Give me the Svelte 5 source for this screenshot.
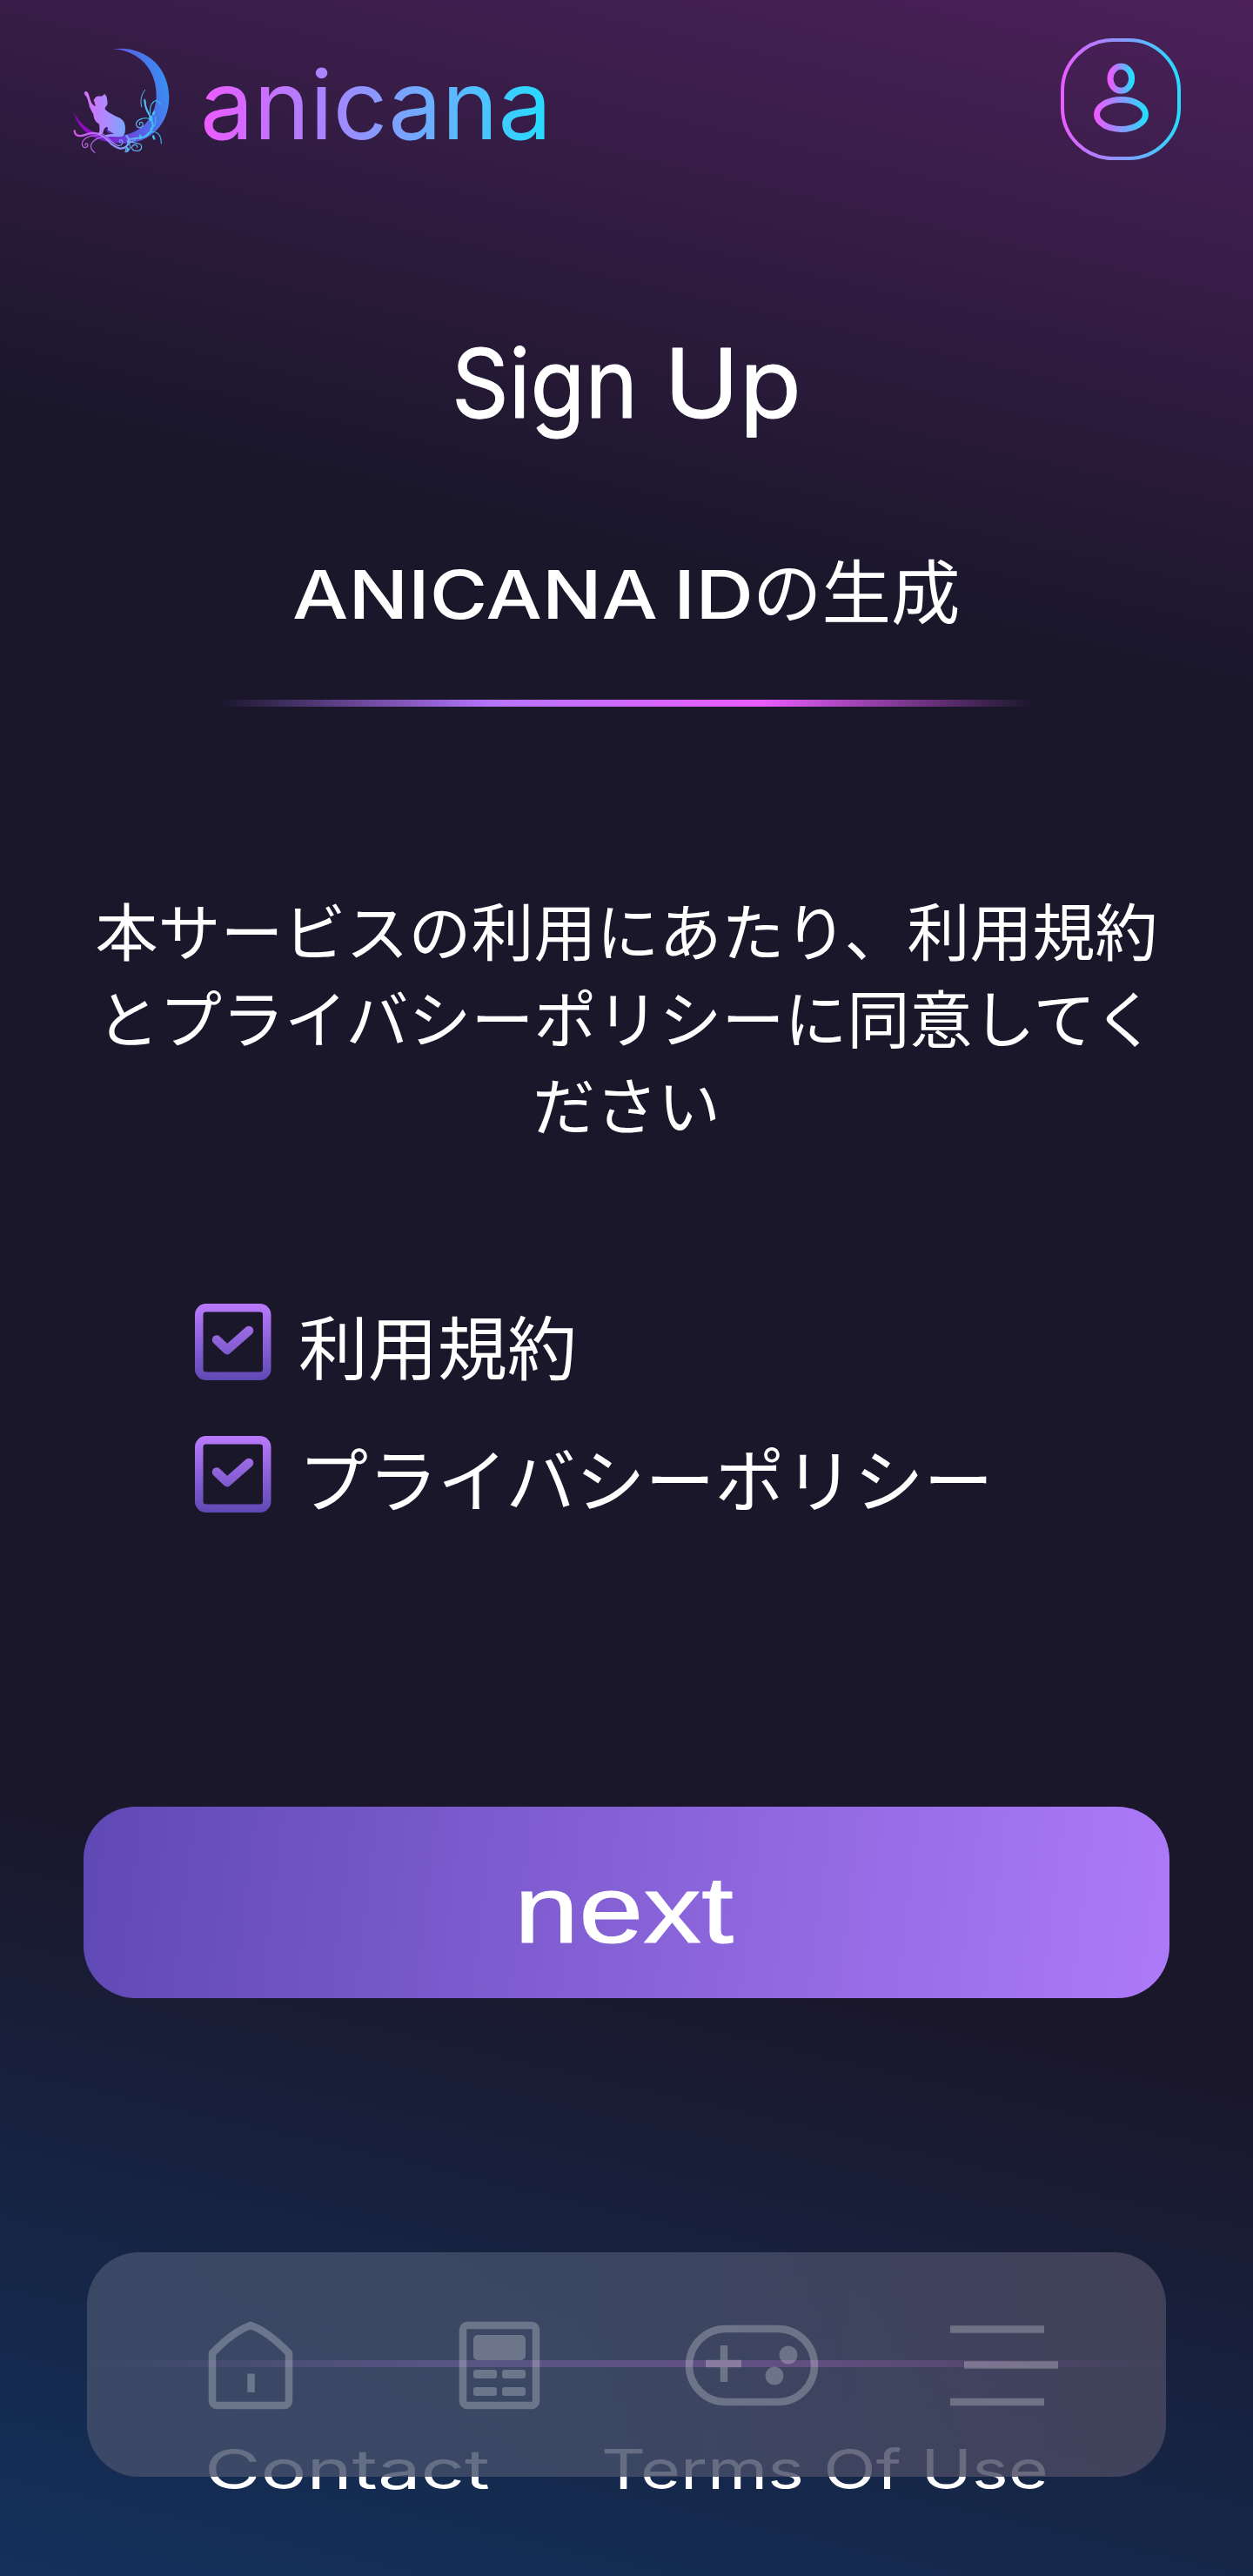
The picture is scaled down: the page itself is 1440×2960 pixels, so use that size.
<script>
  const agreements = ['利用規約', 'プライバシーポリシー'];
</script>

<div class="page">
  <header>
    <svg class="brand" viewBox="78 50 560 130" role="img" aria-label="anicana">
      <defs>
        <linearGradient id="word" gradientUnits="userSpaceOnUse" x1="235" y1="0" x2="628" y2="0">
          <stop offset="0" stop-color="#ea5cff" />
          <stop offset=".36" stop-color="#a685ff" />
          <stop offset="1" stop-color="#26dcff" />
        </linearGradient>
        <linearGradient id="moon" gradientUnits="userSpaceOnUse" x1="20" y1="260" x2="350" y2="180">
          <stop offset="0" stop-color="#9a00c4" />
          <stop offset=".3" stop-color="#7a24cf" />
          <stop offset=".62" stop-color="#5c5ce4" />
          <stop offset="1" stop-color="#3b8df2" />
        </linearGradient>
        <linearGradient id="cat" gradientUnits="userSpaceOnUse" x1="50" y1="0" x2="205" y2="0">
          <stop offset="0" stop-color="#df6cf8" />
          <stop offset=".5" stop-color="#b088ff" />
          <stop offset="1" stop-color="#74a8fa" />
        </linearGradient>
        <linearGradient id="vine" gradientUnits="userSpaceOnUse" x1="20" y1="0" x2="320" y2="0">
          <stop offset="0" stop-color="#d94fe8" />
          <stop offset=".5" stop-color="#8f94fa" />
          <stop offset=".85" stop-color="#45c3f5" />
          <stop offset="1" stop-color="#30b4e0" />
        </linearGradient>
      </defs>
      <g transform="translate(78 50) scale(.3333)">
        <path fill="url(#moon)" d="M154 19 C262 4 349 78 349 186 C349 282 280 344 196 344 C100 344 38 306 20 236 C46 286 92 320 160 320 C242 320 305 262 305 178 C305 92 248 24 154 19Z" />
        <g fill="none" stroke="url(#vine)" stroke-width="3.5" stroke-linecap="round">
          <path stroke-width="7" d="M23 301 C24 326 50 319 72 311 C98 303 122 318 138 334 C164 364 194 372 208 346 C214 334 210 326 202 318" />
          <path d="M104 318 C70 314 44 332 50 352 C56 364 72 358 68 346 C64 342 58 346 60 350" />
          <path d="M118 322 C92 328 76 344 80 360 C83 369 89 373 93 376" />
          <path d="M120 312 C142 320 148 346 174 352 C188 354 194 338 184 332 C176 332 176 340 182 342" />
          <path d="M206 336 C222 322 240 330 262 322 C288 310 300 286 287 260 C280 236 264 226 265 194" stroke-width="6" />
          <path d="M254 218 C248 192 256 172 266 160" stroke-width="3" />
          <path d="M284 250 C264 228 270 212 266 198 M284 240 C280 206 306 180 320 210" />
          <path d="M290 262 C262 250 232 264 236 282 C242 296 262 290 258 274 C252 268 244 274 248 280" />
          <path d="M206 340 C218 352 220 364 200 374 M214 338 C240 348 256 340 254 360 C248 376 222 372 220 358 C224 346 240 346 239 358" />
          <path d="M274 310 C302 296 322 310 322 344 M284 294 C302 288 304 270 302 252" />
          <path d="M198 374 L204 350 L238 326" />
        </g>
        <g fill="#45c3f5">
          <ellipse cx="286" cy="258" rx="6" ry="10" />
          <ellipse cx="296" cy="324" rx="4" ry="9" transform="rotate(-20 296 324)" />
          <ellipse cx="250" cy="322" rx="4" ry="9" />
          <ellipse cx="296" cy="240" rx="4" ry="8" transform="rotate(30 296 240)" />
          <ellipse cx="206" cy="366" rx="4" ry="9" />
        </g>
        <path fill="url(#cat)" d="M60 166 C66 162 71 170 74 182 C80 208 88 214 97 216 C91 207 93 202 91 200 C87 194 89 191 92 191 C97 180 106 182 116 182 C120 180 124 176 128 174 L133 183 C136 186 134 192 136 197 C138 207 136 214 130 218 C126 224 128 228 134 232 C150 246 172 252 184 260 C196 268 200 286 197 304 C196 316 190 321 180 322 L130 321 C128 316 134 314 142 313 L158 312 C150 306 144 302 138 300 C136 296 140 290 134 288 C126 290 124 296 122 304 C120 312 118 316 108 316 C102 312 104 308 108 306 C110 300 110 290 108 278 C94 270 90 260 88 244 C82 232 74 222 72 206 C68 192 66 182 58 176 C55 170 57 167 60 166Z" />
        <path fill="#602ac0" d="M136 287 L139 302 L158 312 C142 312 132 307 133 296Z" />
      </g>
      <text class="word" x="230" y="160" font-size="110" textLength="404" lengthAdjust="spacingAndGlyphs">anicana</text>
    </svg>

    <button class="profile" aria-label="Profile">
      <svg viewBox="1219 44 138 140">
        <defs>
          <linearGradient id="ring"><stop stop-color="#ea5cff" /><stop offset=".45" stop-color="#9491ff" /><stop offset="1" stop-color="#26dcff" /></linearGradient>
        </defs>
        <g fill="none" stroke="url(#ring)">
          <rect x="1221" y="46" width="134" height="136" rx="58" stroke-width="4" />
          <ellipse cx="1288.3" cy="90.3" rx="12.3" ry="14" stroke-width="7" />
          <ellipse cx="1288.5" cy="131.4" rx="28" ry="17" stroke-width="7" />
        </g>
      </svg>
    </button>
  </header>

  <main>
    <h1>
      <svg class="heading" viewBox="480 384 480 130">
        <text x="519" y="480" font-size="110" class="thick" textLength="214" lengthAdjust="spacingAndGlyphs">Sign</text>
        <text x="763" y="480" font-size="110" class="thick" textLength="158" lengthAdjust="spacingAndGlyphs">Up</text>
      </svg>
    </h1>

    <h2>
      <svg class="subheading" viewBox="320 630 800 100">
        <text x="336" y="711" font-size="77" class="medium" textLength="420" lengthAdjust="spacingAndGlyphs">ANICANA</text>
        <text x="774" y="711" font-size="77" class="medium" textLength="92" lengthAdjust="spacingAndGlyphs">ID</text>
        <text class="jp" x="865" y="710" font-size="79.5">の生成</text>
      </svg>
    </h2>
    <div class="rule"></div>

    <p>本サービスの利用にあたり、利用規約とプライバシーポリシーに同意してください</p>

    <ul>
      {#each agreements as label}
        <li>
          <svg class="check" viewBox="0 0 88 88">
            <defs>
              <linearGradient id="tick" gradientUnits="userSpaceOnUse" x1="0" y1="0" x2="0" y2="88">
                <stop stop-color="#b97afc" /><stop offset="1" stop-color="#5f49b4" />
              </linearGradient>
            </defs>
            <g fill="none" stroke="url(#tick)" stroke-linecap="round" stroke-linejoin="round">
              <rect x="4.75" y="4.75" width="78" height="78.5" rx="8" stroke-width="9.5" />
              <path d="M25 41.5 37 53 62 31" stroke-width="10.5" />
            </g>
          </svg>
          <span>{label}</span>
        </li>
      {/each}
    </ul>

    <button class="next">
      <svg viewBox="580 2140 280 110">
        <text x="591" y="2232" font-size="109" class="thick" textLength="252" lengthAdjust="spacingAndGlyphs">next</text>
      </svg>
    </button>
  </main>

  <footer>
    <div class="rule wide"></div>
    <svg class="links" viewBox="220 2800 1000 80">
      <text x="235" y="2859.5" font-size="63" textLength="328" lengthAdjust="spacingAndGlyphs">Contact</text>
      <text x="691" y="2859.5" font-size="63" textLength="514" lengthAdjust="spacingAndGlyphs">Terms Of Use</text>
    </svg>
  </footer>

  <nav>
    <svg viewBox="100 2588 1240 260">
      <g class="icon">
        <path d="M288 2672 Q308 2679 332 2704 V2758 Q332 2764 326 2764 H250 Q244 2764 244 2758 V2704 Q268 2679 288 2672Z" />
        <path d="M288.5 2727.5V2749" />
        <rect x="532" y="2672" width="84" height="92" rx="5" />
        <rect x="792" y="2676" width="144" height="84" rx="42" />
        <path d="M811 2716H852M832 2695V2737" />
        <path d="M1092 2676.5H1200M1108 2717.5H1216M1092 2760H1200" />
      </g>
      <g class="solid">
        <rect x="544" y="2683" width="60" height="29" rx="5" />
        <rect x="544" y="2723" width="27" height="10" rx="3" />
        <rect x="577" y="2723" width="27" height="10" rx="3" />
        <rect x="544" y="2743" width="27" height="10" rx="3" />
        <rect x="577" y="2743" width="27" height="10" rx="3" />
        <circle cx="906" cy="2706" r="10.5" />
        <circle cx="890" cy="2730" r="10.5" />
      </g>
    </svg>
  </nav>
</div>

<style>
  :global(body) {
    margin: 0;
    background: #1a172b;
  }
  .page {
    position: relative;
    width: 1440px;
    height: 2960px;
    overflow: hidden;
    color: #fff;
    font-family: Inter, 'Noto Sans CJK JP', sans-serif;
    background: linear-gradient(193deg, #4c215b 0%, #1a172b 24%, #1a172b 73%, #13315c 100%);
  }
  svg {
    display: block;
    overflow: visible;
  }
  text {
    fill: #fff;
  }
  button {
    border: 0;
    padding: 0;
    background: none;
  }
  header {
    display: flex;
    justify-content: space-between;
    align-items: flex-start;
    box-sizing: border-box;
    height: 384px;
    padding: 44px 83px 0 78px;
  }
  .brand {
    width: 560px;
    height: 130px;
    margin-top: 6px;
  }
  .word {
    fill: url(#word);
  }
  .profile svg {
    width: 138px;
    height: 140px;
  }
  h1,
  h2,
  p,
  ul {
    margin: 0;
    padding: 0;
    font-weight: 400;
  }
  .heading {
    width: 480px;
    height: 130px;
    margin: 0 auto;
  }
  .thick {
    stroke: #fff;
    stroke-width: 1;
    stroke-linejoin: round;
  }
  .medium {
    font-weight: 500;
  }
  .jp {
    font-family: 'Noto Sans CJK JP', sans-serif;
  }
  .subheading {
    width: 800px;
    height: 100px;
    margin: 116px auto 0;
  }
  .rule {
    width: 936px;
    height: 8px;
    margin: 74px auto 0;
    background: linear-gradient(90deg, #b574ff00, #b574ff 33.3%, #ea5cff 66.6%, #ea5cff00);
  }
  .rule.wide {
    width: 1240px;
    margin-top: 416px;
  }
  p {
    width: 1248px;
    margin: 205px auto 0;
    font: 400 72px/100px 'Noto Sans CJK JP', sans-serif;
    text-align: center;
    word-break: break-all;
  }
  ul {
    display: grid;
    gap: 64px;
    margin: 181px 0 0 224px;
    list-style: none;
  }
  li {
    display: flex;
    gap: 31px;
    height: 88px;
    font: 400 80px/92px 'Noto Sans CJK JP', sans-serif;
  }
  .check {
    width: 88px;
    height: 88px;
  }
  .next {
    display: flex;
    justify-content: center;
    align-items: flex-start;
    box-sizing: border-box;
    width: 1248px;
    height: 220px;
    margin: 338px auto 0;
    padding-top: 64px;
    border-radius: 60px;
    background: linear-gradient(97deg, #5f49b4, #ad7af9);
  }
  .next svg {
    width: 280px;
    height: 110px;
  }
  .links {
    width: 1000px;
    height: 80px;
    margin: 80px auto 0;
  }
  nav {
    position: absolute;
    left: 100px;
    top: 2588px;
    width: 1240px;
    height: 258px;
    border-radius: 60px;
    background: linear-gradient(100deg, #434f6bd1, #434e69d1 45%, #474a64d1 75%, #4a4960d1);
  }
  .icon {
    fill: none;
    stroke: #ffffff40;
    stroke-width: 8.5;
  }
  .solid {
    fill: #ffffff40;
  }
</style>
